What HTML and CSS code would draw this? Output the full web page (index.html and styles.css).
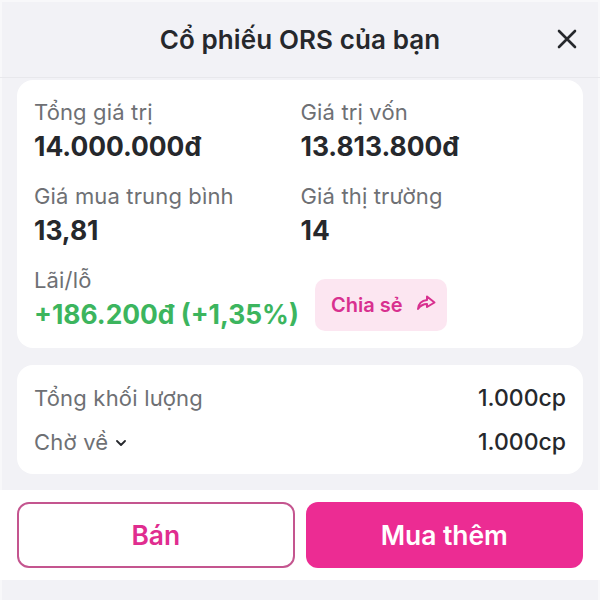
FILE: index.html
```html
<!DOCTYPE html>
<html lang="vi">
<head>
  <meta charset="UTF-8">
  <title>Cổ phiếu ORS của bạn</title>
  <link rel="stylesheet" href="styles.css">
</head>
<body>

  <header class="top-bar">
    <h1>Cổ phiếu ORS của bạn</h1>
    <button class="close-btn" aria-label="Đóng">
      <svg width="20" height="20" viewBox="0 0 20 20"><path d="M2 2L18 18M18 2L2 18" /></svg>
    </button>
  </header>

  <main class="content">
    <!-- Summary -->
    <section class="card summary">
      <div class="stat-grid">
        <div class="stat">
          <div class="stat-label">Tổng giá trị</div>
          <div class="stat-value">14.000.000đ</div>
        </div>
        <div class="stat">
          <div class="stat-label">Giá trị vốn</div>
          <div class="stat-value">13.813.800đ</div>
        </div>
        <div class="stat">
          <div class="stat-label">Giá mua trung bình</div>
          <div class="stat-value">13,81</div>
        </div>
        <div class="stat">
          <div class="stat-label">Giá thị trường</div>
          <div class="stat-value">14</div>
        </div>
      </div>
      <div class="profit-row">
        <div class="stat">
          <div class="stat-label">Lãi/lỗ</div>
          <div class="stat-value profit">+186.200đ (+1,35%)</div>
        </div>
        <button class="share-btn">
          Chia sẻ
          <svg class="share-icon" width="20" height="16" viewBox="0 0 20 16"><path d="M11 1.5L18.5 7.5L11 12V9C7.5 9 4.5 10.5 2 14C2.5 9 5.5 5.5 11 5Z" /></svg>
        </button>
      </div>
    </section>

    <!-- Volume -->
    <section class="card volume">
      <div class="volume-row">
        <span class="volume-label">Tổng khối lượng</span>
        <span class="volume-value">1.000cp</span>
      </div>
      <div class="volume-row">
        <span class="volume-label">Chờ về
          <svg class="chevron" width="10" height="7" viewBox="0 0 10 7"><path d="M1 1L5 5L9 1" /></svg>
        </span>
        <span class="volume-value">1.000cp</span>
      </div>
    </section>
  </main>

  <footer class="actions">
    <button class="btn btn-outline">Bán</button>
    <button class="btn btn-solid">Mua thêm</button>
  </footer>

</body>
</html>
```

FILE: styles.css
```css
html, body {
  height: 600px;
}

body {
  margin: 0;
  overflow: hidden;
  font-family: Inter, 'Liberation Sans', sans-serif;
  background-color: #f2f2f6;
  color: #26282c;
  box-shadow: inset 0 2px 0 #f8f8fa, inset 2px 0 0 #f8f8fa, inset -2px 0 0 #f8f8fa;
}

button {
  font-family: inherit;
  cursor: pointer;
}

.top-bar {
  height: 78px;
  box-sizing: border-box;
  padding-top: 2px;
  border-bottom: 1px solid #e8e8ec;
  display: flex;
  align-items: center;
  justify-content: center;
  position: relative;
}

.top-bar h1 {
  margin: 0;
  font-size: 26px;
  font-weight: 600;
  letter-spacing: 0.1px;
}

.close-btn {
  position: absolute;
  right: 23px;
  top: 29px;
  padding: 0;
  border: none;
  background: none;
  display: flex;
}

.close-btn path {
  stroke: #26282c;
  stroke-width: 2.6;
  stroke-linecap: round;
  fill: none;
}

.content {
  padding: 2px 17px 16px;
  display: flex;
  flex-direction: column;
  gap: 17px;
}

.card {
  background: #ffffff;
  border-radius: 16px;
}

.summary {
  height: 268px;
  box-sizing: border-box;
  padding: 18px 17px 0;
}

.stat-grid {
  display: grid;
  grid-template-columns: 266.5px 1fr;
  row-gap: 19px;
}

.stat-label {
  font-size: 22px;
  letter-spacing: 0.15px;
  line-height: 28px;
  color: #6e7074;
}

.stat-value {
  margin-top: 3px;
  font-size: 26.4px;
  line-height: 34px;
  font-weight: 700;
}

.profit {
  color: #3cb55e;
}

.profit-row {
  margin-top: 19px;
  display: flex;
  align-items: flex-end;
  gap: 16px;
}

.share-btn {
  width: 132px;
  height: 52px;
  padding: 0 0 0 5px;
  border: none;
  border-radius: 10px;
  background-color: #fce6f1;
  color: #d8308f;
  font-size: 20px;
  font-weight: 600;
  display: flex;
  align-items: center;
  justify-content: center;
  gap: 13px;
}

.share-icon {
  margin-top: -4px;
}

.share-icon path {
  fill: none;
  stroke: #d8308f;
  stroke-width: 2;
  stroke-linejoin: round;
}

.volume {
  height: 109px;
  box-sizing: border-box;
  padding: 11px 17px 0;
}

.volume-row {
  height: 44px;
  display: flex;
  align-items: center;
  justify-content: space-between;
}

.volume-label {
  font-size: 22px;
  letter-spacing: 0.2px;
  color: #6e7074;
}

.chevron {
  margin-left: 1px;
  vertical-align: 3px;
}

.chevron path {
  fill: none;
  stroke: #26282c;
  stroke-width: 1.8;
  stroke-linecap: round;
  stroke-linejoin: round;
}

.volume-value {
  font-size: 23px;
  font-weight: 500;
}

.actions {
  height: 90px;
  box-sizing: border-box;
  padding: 12px 17px 0;
  background: #ffffff;
  display: grid;
  grid-template-columns: 1fr 1fr;
  align-items: start;
  gap: 11px;
}

.btn {
  height: 66px;
  padding: 0;
  border-radius: 12px;
  font-size: 26.4px;
  font-weight: 600;
}

.btn-outline {
  background: #ffffff;
  border: 2px solid #c4558f;
  color: #e02d8f;
}

.btn-solid {
  background-color: #ec2c93;
  border: none;
  color: #ffffff;
}
```
